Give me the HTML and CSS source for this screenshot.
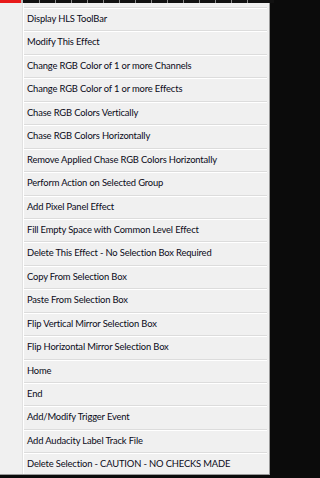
FILE: index.html
```html
<!DOCTYPE html>
<html>
<head>
<meta charset="utf-8">
<link rel="stylesheet" href="styles.css">
</head>
<body>
<div class="topstrip">
  <div class="red"></div>
  <div class="mark"></div>
  <div class="ruler">
    <span></span><span></span><span></span><span></span><span></span><span></span><span></span><span></span><span></span><span></span><span></span><span></span><span></span><span></span>
  </div>
</div>
<div class="frame">
  <div class="menu">
    <div class="gutter"></div>
    <ul class="items">
      <li>Display HLS ToolBar</li>
      <li>Modify This Effect</li>
      <li>Change RGB Color of 1 or more Channels</li>
      <li>Change RGB Color of 1 or more Effects</li>
      <li>Chase RGB Colors Vertically</li>
      <li>Chase RGB Colors Horizontally</li>
      <li>Remove Applied Chase RGB Colors Horizontally</li>
      <li>Perform Action on Selected Group</li>
      <li>Add Pixel Panel Effect</li>
      <li>Fill Empty Space with Common Level Effect</li>
      <li>Delete This Effect - No Selection Box Required</li>
      <li>Copy From Selection Box</li>
      <li>Paste From Selection Box</li>
      <li>Flip Vertical Mirror Selection Box</li>
      <li>Flip Horizontal Mirror Selection Box</li>
      <li>Home</li>
      <li>End</li>
      <li>Add/Modify Trigger Event</li>
      <li>Add Audacity Label Track File</li>
      <li>Delete Selection - CAUTION - NO CHECKS MADE</li>
    </ul>
  </div>
  <div class="side"></div>
</div>
</body>
</html>
```
FILE: styles.css
```css
html, body {
  margin: 0;
  padding: 0;
  background: #0b0b0b;
  width: 274px;
  height: 478px;
  overflow: hidden;
}
.topstrip {
  display: flex;
  height: 3px;
}
.red {
  width: 21px;
  background: #e81a1a;
}
.mark {
  width: 2px;
  background: #b8b8b8;
}
.ruler {
  flex: 1;
  display: flex;
  gap: 15px;
  padding-left: 16px;
  background: #111;
}
.ruler span {
  width: 1px;
  background: #8a8a8a;
}
.frame {
  display: flex;
  height: 472px;
}
.menu {
  width: 270px;
  display: flex;
  background: #f0f0f0;
  border-right: 1px solid #9a9a9a;
  border-bottom: 1px solid #9a9a9a;
  overflow: hidden;
  box-sizing: border-box;
}
.gutter {
  width: 22px;
  border-right: 1px solid #e2e2e2;
  box-shadow: 1px 0 0 #ffffff;
  flex: none;
}
.items {
  list-style: none;
  margin: 0;
  padding: 4px 2px 0 1px;
  flex: 1;
}
.items li {
  height: 23.45px;
  box-sizing: border-box;
  border-top: 1px solid #dcdcdc;
  box-shadow: inset 0 1px 0 #ffffff;
  padding-left: 3px;
  line-height: 21px;
  font-family: Lato, "Open Sans", sans-serif;
  font-size: 9.4px;
  letter-spacing: -0.15px;
  color: #0a0a18;
  white-space: nowrap;
}
.side {
  flex: 1;
  background: #0b0b0b;
}
```
